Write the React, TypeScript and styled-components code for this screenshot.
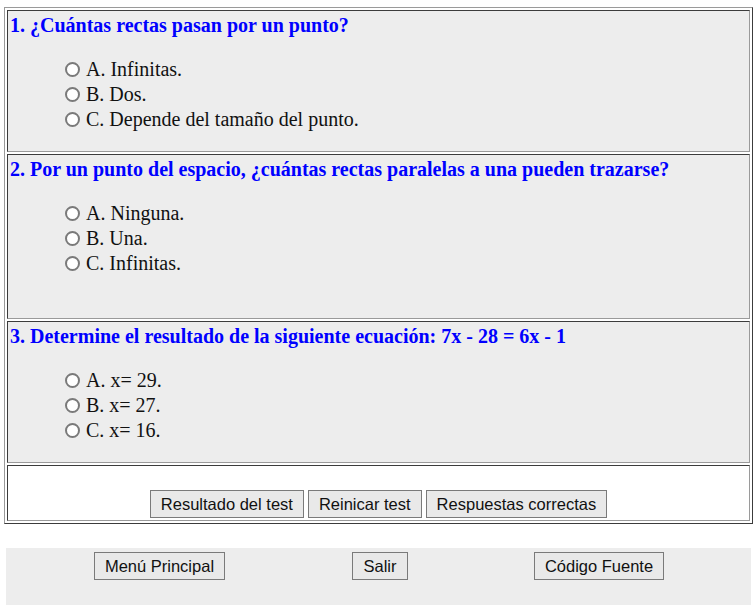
import React from 'react'
import styled, { createGlobalStyle } from 'styled-components'

const GlobalStyle = createGlobalStyle`
  body {
    margin: 0;
    background: #ffffff;
    font-family: 'Liberation Serif', 'Times New Roman', serif;
  }
`

const Page = styled.div`
  padding: 7px 3px 0 4px;
`

const Quiz = styled.div`
  display: grid;
  gap: 2px;
  padding: 2px;
  border: 1px solid;
  border-color: #9a9a9a #3c3c3c #3c3c3c #9a9a9a;
`

const Cell = styled.div<{ $extra?: number }>`
  background: #ededed;
  border: 1px solid;
  border-color: #3c3c3c #9a9a9a #9a9a9a #3c3c3c;
  padding: 3px 1px ${p => 19 + (p.$extra || 0)}px 2px;
`

const Title = styled.div`
  color: #0000ff;
  font-weight: bold;
  font-size: 20px;
  line-height: 22px;
`

const Options = styled.div`
  margin: 21px 0 0 50px;
`

const Option = styled.label`
  display: flex;
  align-items: center;
  font-size: 20px;
  line-height: 25px;
  color: #111;
`

const Radio = styled.input`
  appearance: none;
  box-sizing: border-box;
  width: 15px;
  height: 15px;
  margin: 0 6px 1px 5px;
  border: 2px solid #7a7a7a;
  border-radius: 50%;
  background: #ffffff;
`

const ActionCell = styled.div`
  background: #ffffff;
  border: 1px solid;
  border-color: #3c3c3c #9a9a9a #9a9a9a #3c3c3c;
  padding: 24px 0 2px;
  display: flex;
  justify-content: center;
  gap: 4px;
`

const Button = styled.button`
  font-family: 'Liberation Sans', Arial, sans-serif;
  font-size: 16.5px;
  color: #111;
  background: #e9e9e9;
  border: 1px solid #7a7a7a;
  border-radius: 0;
  padding: 4px 10px;
  height: 28px;
  line-height: 18px;
`

const Footer = styled.div`
  margin: 24px 2px 0;
  height: 53px;
  padding-top: 4px;
  background: #ededed;
  display: grid;
  grid-template-columns: 307px 134px 1fr;
  align-items: start;
  justify-items: center;
`

type Question = {
  title: string
  options: string[]
  extra?: number
}

const questions: Question[] = [
  {
    title: '1. ¿Cuántas rectas pasan por un punto?',
    options: ['A. Infinitas.', 'B. Dos.', 'C. Depende del tamaño del punto.'],
  },
  {
    title: '2. Por un punto del espacio, ¿cuántas rectas paralelas a una pueden trazarse?',
    options: ['A. Ninguna.', 'B. Una.', 'C. Infinitas.'],
    extra: 23,
  },
  {
    title: '3. Determine el resultado de la siguiente ecuación: 7x - 28 = 6x - 1',
    options: ['A. x= 29.', 'B. x= 27.', 'C. x= 16.'],
  },
]

const App: React.FC = () => {
  return (
    <Page>
      <GlobalStyle />
      <Quiz>
        {questions.map((q, i) => (
          <Cell key={i} $extra={q.extra}>
            <Title>{q.title}</Title>
            <Options>
              {q.options.map((o, j) => (
                <Option key={j}>
                  <Radio type="radio" name={'p' + i} />
                  {o}
                </Option>
              ))}
            </Options>
          </Cell>
        ))}
        <ActionCell>
          <Button>Resultado del test</Button>
          <Button>Reinicar test</Button>
          <Button>Respuestas correctas</Button>
        </ActionCell>
      </Quiz>
      <Footer>
        <Button>Menú Principal</Button>
        <Button>Salir</Button>
        <Button>Código Fuente</Button>
      </Footer>
    </Page>
  )
}

export default App
